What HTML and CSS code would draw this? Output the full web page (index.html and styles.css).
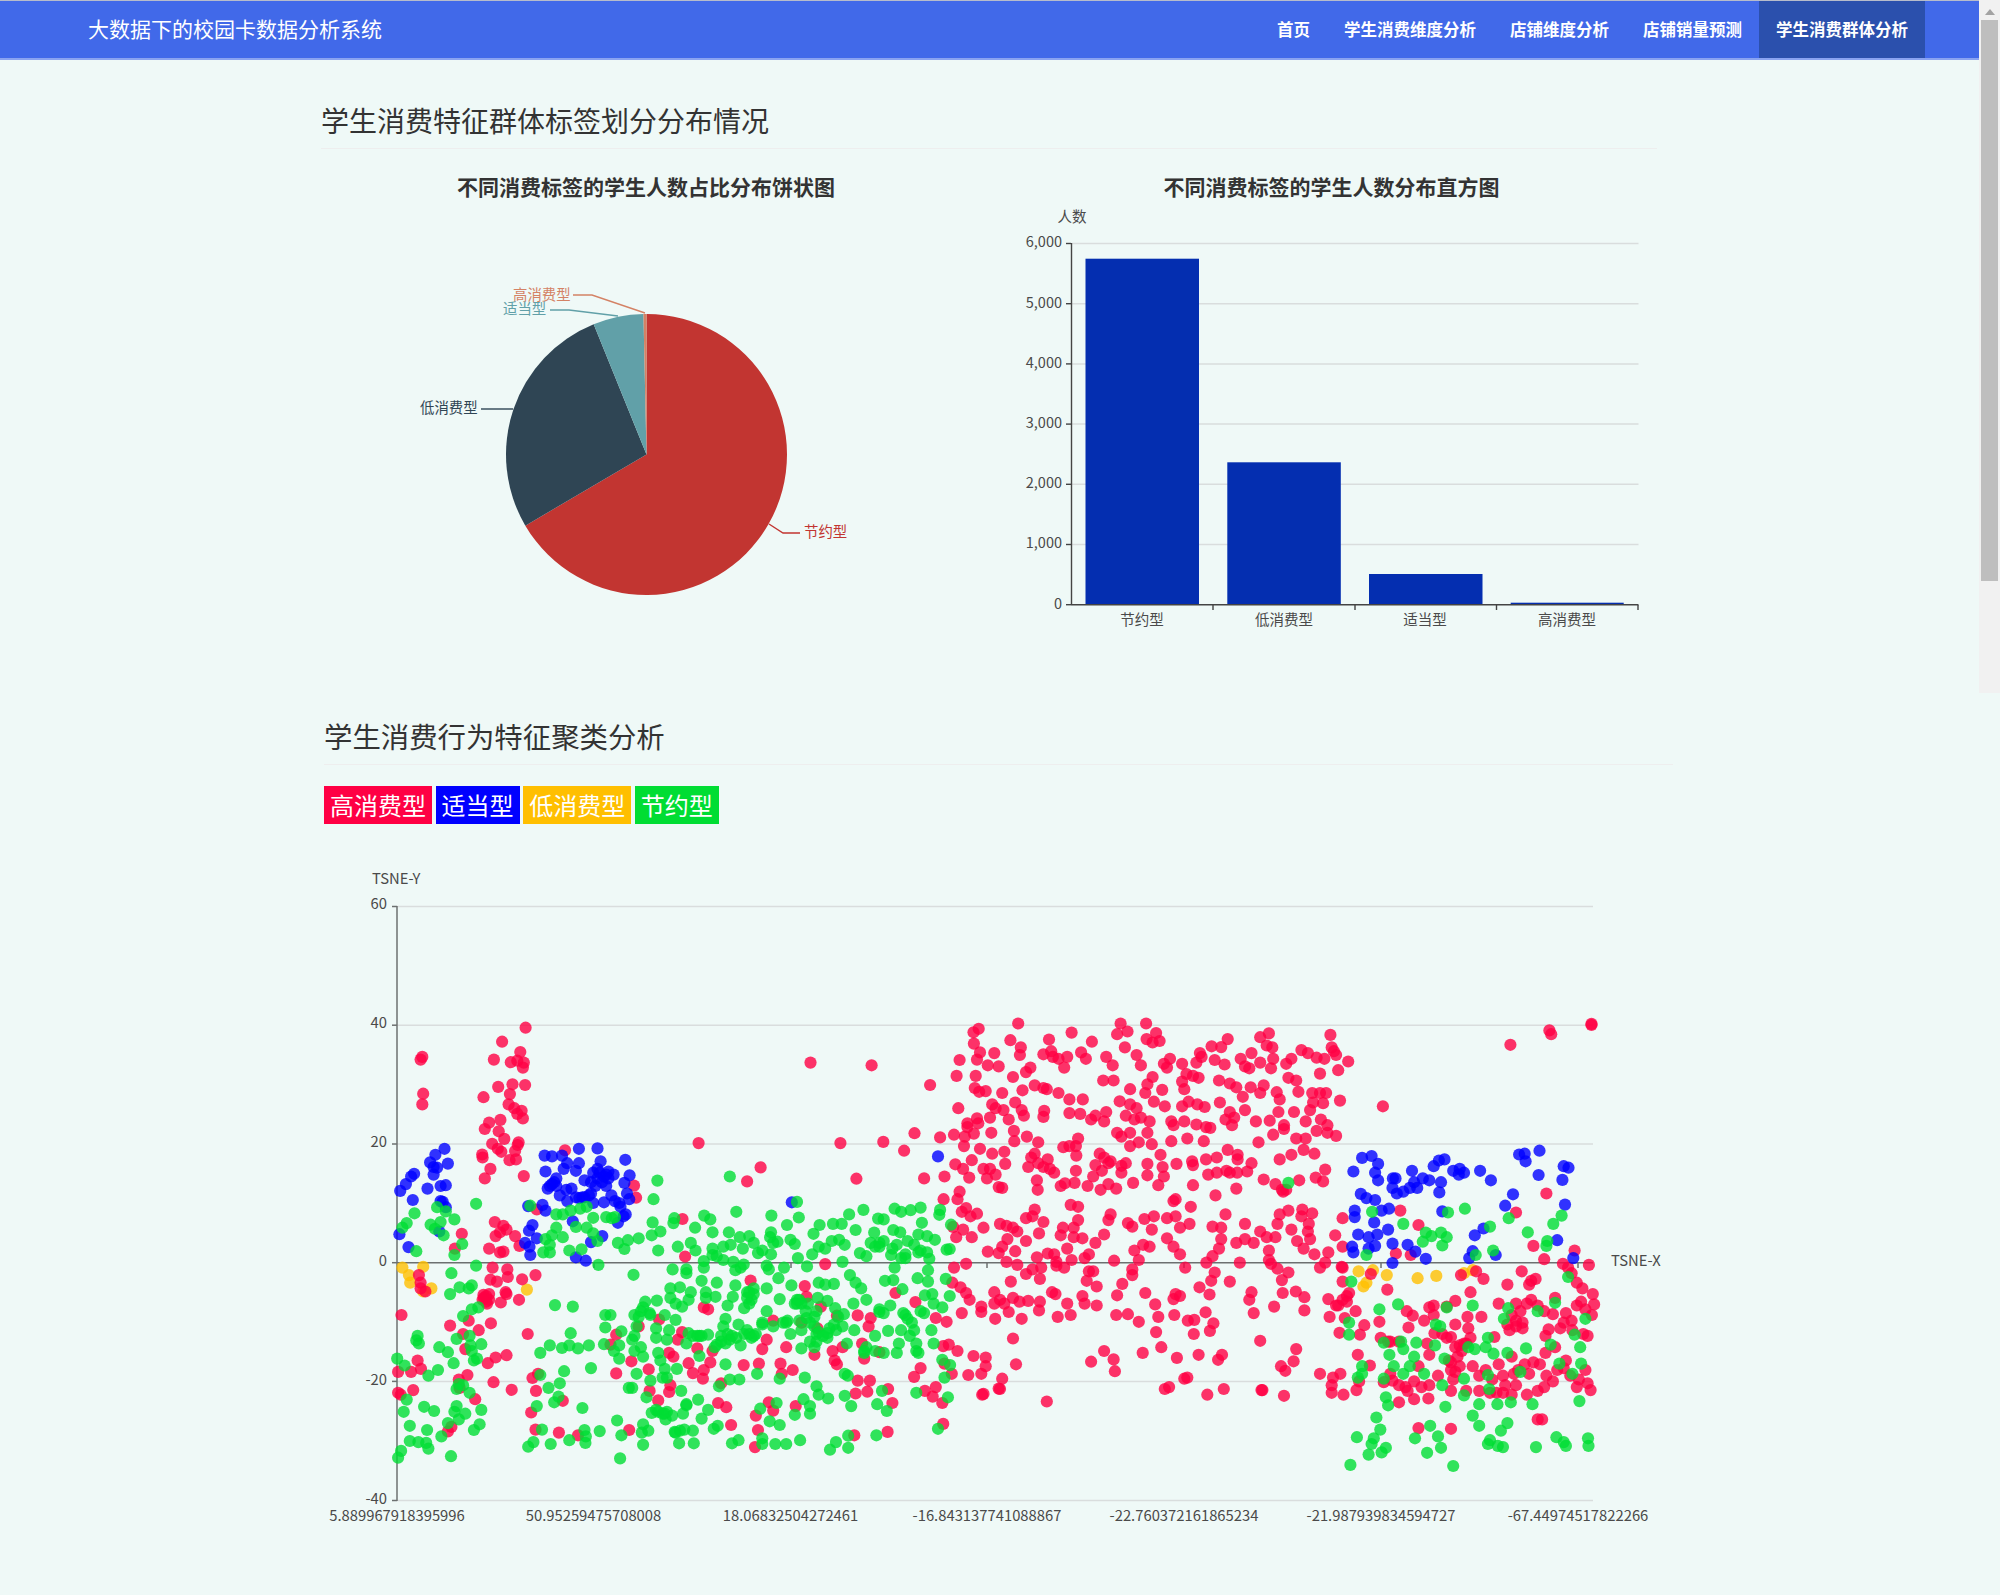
FILE: index.html
```html
<!DOCTYPE html>
<html lang="zh-CN">
<head>
	<meta charset="UTF-8">
	<meta name="viewport" content="width=device-width, initial-scale=1.0">
	<title>学生消费群体分析</title>
	<link rel="stylesheet" href="styles.css">
</head>
<body>

	<div class="page">
		<div class="main">
			<nav class="navbar">
				<div class="brand">大数据下的校园卡数据分析系统</div>
				<ul class="nav-links">
					<li><a href="#">首页</a></li>
					<li><a href="#">学生消费维度分析</a></li>
					<li><a href="#">店铺维度分析</a></li>
					<li><a href="#">店铺销量预测</a></li>
					<li class="active"><a href="#">学生消费群体分析</a></li>
				</ul>
			</nav>

			<section class="section section-labels">
				<h2>学生消费特征群体标签划分分布情况</h2>
				<div class="chart-row">
					<div class="chart-panel panel-pie">
						<h3>不同消费标签的学生人数占比分布饼状图</h3>
						<svg class="chart" viewBox="321 204 650 440" width="650" height="440">
							<g id="pie-slices"></g>
							<polyline class="leader" stroke="#d48265" points="573,295 592,295 645,313"/>
							<polyline class="leader" stroke="#61a0a8" points="550,310 569,310 618,316"/>
							<polyline class="leader" stroke="#2f4554" points="481,409 513,409"/>
							<polyline class="leader" stroke="#c23531" points="769,524 783,533 800,533"/>
							<text class="pie-label" fill="#d48265" x="513" y="300">高消费型</text>
							<text class="pie-label" fill="#61a0a8" x="503" y="314">适当型</text>
							<text class="pie-label" fill="#2f4554" x="420" y="413">低消费型</text>
							<text class="pie-label" fill="#c23531" x="804" y="537">节约型</text>
						</svg>
					</div>
					<div class="chart-panel panel-bar">
						<h3>不同消费标签的学生人数分布直方图</h3>
						<svg class="chart" viewBox="989 204 685 440" width="685" height="440">
							<g class="grid">
								<line x1="1072" y1="243.5" x2="1638.5" y2="243.5"/>
								<line x1="1072" y1="303.7" x2="1638.5" y2="303.7"/>
								<line x1="1072" y1="363.9" x2="1638.5" y2="363.9"/>
								<line x1="1072" y1="424.1" x2="1638.5" y2="424.1"/>
								<line x1="1072" y1="484.3" x2="1638.5" y2="484.3"/>
								<line x1="1072" y1="544.5" x2="1638.5" y2="544.5"/>
							</g>
							<g class="bars">
								<rect x="1085.5" y="258.7" width="113.5" height="346"/>
								<rect x="1227.3" y="462.3" width="113.5" height="142.4"/>
								<rect x="1369" y="574" width="113.5" height="30.7"/>
								<rect x="1510.7" y="602.7" width="113" height="2"/>
							</g>
							<g class="axis">
								<line x1="1071.5" y1="243" x2="1071.5" y2="605"/>
								<line x1="1071" y1="604.7" x2="1638.5" y2="604.7"/>
								<line x1="1066" y1="243.5" x2="1071" y2="243.5"/>
								<line x1="1066" y1="303.7" x2="1071" y2="303.7"/>
								<line x1="1066" y1="363.9" x2="1071" y2="363.9"/>
								<line x1="1066" y1="424.1" x2="1071" y2="424.1"/>
								<line x1="1066" y1="484.3" x2="1071" y2="484.3"/>
								<line x1="1066" y1="544.5" x2="1071" y2="544.5"/>
								<line x1="1066" y1="604.7" x2="1071" y2="604.7"/>
								<line x1="1213" y1="605" x2="1213" y2="610"/>
								<line x1="1355" y1="605" x2="1355" y2="610"/>
								<line x1="1496.5" y1="605" x2="1496.5" y2="610"/>
								<line x1="1638" y1="605" x2="1638" y2="610"/>
							</g>
							<g class="tick-text tick-end">
								<text x="1062" y="247">6,000</text>
								<text x="1062" y="307.5">5,000</text>
								<text x="1062" y="368">4,000</text>
								<text x="1062" y="428">3,000</text>
								<text x="1062" y="488">2,000</text>
								<text x="1062" y="548">1,000</text>
								<text x="1062" y="608.5">0</text>
							</g>
							<g class="tick-text tick-middle">
								<text x="1072" y="222">人数</text>
								<text x="1142" y="624.5">节约型</text>
								<text x="1284" y="624.5">低消费型</text>
								<text x="1425" y="624.5">适当型</text>
								<text x="1567" y="624.5">高消费型</text>
							</g>
						</svg>
					</div>
				</div>
			</section>

			<section class="section section-cluster">
				<h2>学生消费行为特征聚类分析</h2>
				<div class="legend">
					<span class="tag tag-high">高消费型</span>
					<span class="tag tag-mid">适当型</span>
					<span class="tag tag-low">低消费型</span>
					<span class="tag tag-save">节约型</span>
				</div>
				<svg class="chart scatter" viewBox="324 850 1400 700" width="1400" height="700">
					<g class="grid">
						<line x1="397" y1="906.5" x2="1593" y2="906.5"/>
						<line x1="397" y1="1025.2" x2="1593" y2="1025.2"/>
						<line x1="397" y1="1144" x2="1593" y2="1144"/>
						<line x1="397" y1="1381.4" x2="1593" y2="1381.4"/>
						<line x1="397" y1="1500.5" x2="1593" y2="1500.5"/>
					</g>
					<g class="axis axis-soft">
						<line x1="397" y1="906" x2="397" y2="1501"/>
						<line x1="397" y1="1262.7" x2="1593" y2="1262.7"/>
						<line x1="392" y1="906.5" x2="397" y2="906.5"/>
						<line x1="392" y1="1025.2" x2="397" y2="1025.2"/>
						<line x1="392" y1="1144" x2="397" y2="1144"/>
						<line x1="392" y1="1262.7" x2="397" y2="1262.7"/>
						<line x1="392" y1="1381.4" x2="397" y2="1381.4"/>
						<line x1="392" y1="1500.5" x2="397" y2="1500.5"/>
						<line x1="594" y1="1263" x2="594" y2="1268"/>
						<line x1="791" y1="1263" x2="791" y2="1268"/>
						<line x1="987" y1="1263" x2="987" y2="1268"/>
						<line x1="1184" y1="1263" x2="1184" y2="1268"/>
						<line x1="1381" y1="1263" x2="1381" y2="1268"/>
						<line x1="1578" y1="1263" x2="1578" y2="1268"/>
					</g>
					<g id="scatter-dots"></g>
					<g class="tick-text tick-end">
						<text x="387" y="909">60</text>
						<text x="387" y="1028">40</text>
						<text x="387" y="1147">20</text>
						<text x="387" y="1266">0</text>
						<text x="387" y="1385">-20</text>
						<text x="387" y="1504">-40</text>
					</g>
					<g class="tick-text tick-middle">
						<text x="397" y="1520.5">5.889967918395996</text>
						<text x="593.5" y="1520.5">50.95259475708008</text>
						<text x="790.5" y="1520.5">18.06832504272461</text>
						<text x="987" y="1520.5">-16.843137741088867</text>
						<text x="1184" y="1520.5">-22.760372161865234</text>
						<text x="1381" y="1520.5">-21.987939834594727</text>
						<text x="1578" y="1520.5">-67.44974517822266</text>
					</g>
					<text class="tick-text" x="372" y="883.5">TSNE-Y</text>
					<text class="tick-text" x="1611" y="1265.5">TSNE-X</text>
				</svg>
			</section>
		</div>

		<div class="scrollbar">
			<div class="scroll-arrow"></div>
			<div class="scroll-thumb"></div>
		</div>
	</div>

	<script src="charts.js"></script>

</body>
</html>
```

FILE: styles.css
```css
* {
	box-sizing: border-box;
}
html, body {
	margin: 0;
	height: 1595px;
	overflow: hidden;
}
body {
	font-family: 'Noto Sans CJK SC', 'Noto Sans', sans-serif;
	background-color: #eff9f7;
	color: #333;
}
.page {
	display: flex;
	align-items: flex-start;
}
.main {
	width: 1979px;
}
.navbar {
	display: flex;
	justify-content: space-between;
	height: 60px;
	padding: 0 54px 0 88px;
	background-color: #4169e9;
	border-top: 1px solid #b7bccb;
	border-bottom: 2px solid #8aa3f1;
}
.brand {
	font-size: 21px;
	line-height: 55px;
	color: #fff;
}
.nav-links {
	display: flex;
	margin: 0;
	padding: 0;
	list-style: none;
}
.nav-links a {
	display: block;
	padding: 0 17px;
	font-size: 16.5px;
	font-weight: 700;
	line-height: 57px;
	color: #fff;
	text-decoration: none;
}
.nav-links .active {
	background-color: #2b50ad;
}
.section h2 {
	margin: 0;
	padding-bottom: 8px;
	font-size: 28px;
	font-weight: 400;
	line-height: 40px;
	color: #333;
	border-bottom: 1px solid #eeeeee;
}
.section-labels {
	width: 1336px;
	margin: 40px 0 0 321px;
}
.section-cluster {
	width: 1349px;
	margin: 72px 0 0 324px;
}
.section-cluster h2 {
	font-size: 28.4px;
}
.chart-row {
	display: flex;
	gap: 18px;
}
.chart-panel h3 {
	margin: 22px 0 3px;
	font-size: 21px;
	font-weight: 700;
	line-height: 30px;
	text-align: center;
	color: #333;
}
.panel-pie {
	flex: 0 0 650px;
}
.panel-bar {
	flex: 0 0 685px;
}
.chart {
	display: block;
}
.leader {
	fill: none;
	stroke-width: 1.4;
}
.pie-label {
	font-size: 14.4px;
}
.grid line {
	stroke: #d9dddd;
	stroke-width: 1.5;
}
.bars rect {
	fill: #042eb0;
}
.axis line {
	stroke: #444;
	stroke-width: 1.4;
}
.axis-soft line {
	stroke: #6c7070;
	stroke-width: 1.5;
}
.tick-text {
	font-size: 14.5px;
	fill: #4a4a4a;
}
.scatter .tick-text {
	font-size: 14.8px;
}
.tick-end {
	text-anchor: end;
}
.tick-middle {
	text-anchor: middle;
}
.legend {
	display: flex;
	gap: 3.6px;
	margin-top: 21px;
	margin-bottom: 26px;
}
.tag {
	padding: 0 6px;
	font-size: 24px;
	line-height: 38px;
	color: #fff;
}
.tag-high {
	background-color: #ff0044;
}
.tag-mid {
	background-color: #0000ff;
}
.tag-low {
	background-color: #ffbf00;
}
.tag-save {
	background-color: #00dd33;
}
.dot {
	fill-opacity: 0.8;
}
.scrollbar {
	flex: 0 0 21px;
	height: 693px;
	padding-left: 1px;
	background-color: #f1f1f1;
}
.scroll-arrow {
	width: 0;
	height: 0;
	margin: 9px auto 5px;
	border-left: 5px solid transparent;
	border-right: 5px solid transparent;
	border-bottom: 6px solid #a3a3a3;
}
.scroll-thumb {
	width: 17px;
	height: 561px;
	margin: 3px 0 0 1px;
	background-color: #bebebe;
}
```

FILE: charts.js
```js
// pie: values in the order echarts draws them, clockwise from the top
const pieData = [
	[5750, '#c23531'],
	[2360, '#2f4554'],
	[500, '#61a0a8'],
	[30, '#d48265']
];

function drawPie() {
	const cx = 646.5, cy = 454.5, r = 140.5;
	const group = document.getElementById('pie-slices');
	const total = pieData.reduce((sum, item) => sum + item[0], 0);
	let angle = 0;
	pieData.forEach(item => {
		const next = angle + item[0] / total * Math.PI * 2;
		const path = document.createElementNS('http://www.w3.org/2000/svg', 'path');
		const large = next - angle > Math.PI ? 1 : 0;
		path.setAttribute('d', 'M' + cx + ' ' + cy +
			'L' + (cx + Math.sin(angle) * r) + ' ' + (cy - Math.cos(angle) * r) +
			'A' + r + ' ' + r + ' 0 ' + large + ' 1 ' + (cx + Math.sin(next) * r) + ' ' + (cy - Math.cos(next) * r) + 'Z');
		path.setAttribute('fill', item[1]);
		group.appendChild(path);
		angle = next;
	});
}

// scatter points are x,y pairs, kept in two blocks with their own x origin
const scaleX = 2.306, scaleY = 2.635;

const leftPoints = {
	red: [232,157,236,150,238,247,236,275,420,110,474,73,401,157,462,137,440,164,455,160,470,165,468,178,411,229,444,222,473,224,377,256,438,248,435,275,448,285,465,292,455,300,468,312,380,340,390,323,416,316,412,346,425,366,397,379,410,392,418,400,374,407,375,415,458,375,456,382,450,398,437,422,452,420,470,464,393,445,380,470,565,396,724,489,729,521,873,377,1016,441,985,478,1200,377,1299,374,1347,397,1371,351,1237,471,1131,165,1272,172,1407,224,1393,470,
		403,585,423,595,430,605,415,612,405,622,450,622,327,616,311,655,390,655,415,665,423,663,460,648,398,705,432,710,433,730,393,737,408,742,497,725,466,736,377,777,390,775,383,795,417,797,428,770,430,775,459,790,228,725,232,745,232,760,243,768,188,830,300,858,394,852,366,870,343,845,330,880,335,920,479,880,430,936,405,942,387,957,225,950,233,972,180,980,210,980,340,988,320,1000,322,1022,400,1007,215,1028,180,1035,186,1040,442,1027,358,1052,503,985,490,996,498,1030,487,1087,497,1132,560,1056,551,1140,595,1147,303,1125,295,1137,
		500,552,836,577,842,676,1165,696,993,739,1118,754,1122,782,1155,808,1327,772,1373,796,1240,831,1270,838,1265,860,1045,845,1192,832,1110,850,1147,865,835,875,825,895,683,882,670,908,735,860,782,842,870,918,895,815,885,810,805,930,815,940,718,952,850,957,905,925,900,955,885,975,758,973,683,984,860,983,883,998,1030,895,1020,920,1075,915,1062,958,1090,975,1065,985,977,962,1012,958,1140,935,1182,925,1205,915,1187,950,1192,960,1250,905,1255,945,1290,928,1437,912,1450,908,1470,925,1507,938,1440,958,1535,942,1535,965,1385,970,1370,993,1457,985,1495,988,1525,985,1240,1003,1268,1003,1235,1037,1262,1032,1310,1025,1320,1062,1097,1070,1045,1082,1035,1060,1005,1095,1010,1133,1003,1178,1232,1147,1309,1138,1420,1020,1395,1030,1413,1045,1435,1062,1437,1117,1527,1040,1530,1038,1565,1024,808,1015,805,1033,760,1030,780,1055,918,1062,937,1073,948,1120,713,1133,925,1010,
		1507,85,1519,76,1508,115,1522,138,1475,158,1515,157,1540,172,1468,200,1512,200,1510,232,1520,242,1535,240,1555,140,1565,175,1472,285,1550,275,1558,285,1515,312,1545,310,1493,325,1493,335,1518,325,1462,355,1487,360,1508,352,1548,350,1430,362,1485,385,1522,392,1550,405,1503,422,1465,433,1483,445,1530,445,1545,445,1497,468,1538,470,1558,460,1440,465,1565,493,1475,505,1470,525,1438,525,1490,548,1480,558,1515,563,1500,570,1530,600,1460,598,1483,605,1467,625,1503,625,1540,663,1565,667,1462,705,1490,695,1458,745,1477,757,1490,772,1498,790,1525,808,1525,822,1555,770,1555,800,1480,825,1557,840,1445,848,1420,838,
		383,780,378,785,390,790,385,800,375,790],
	blue: [287,392,266,408,254,428,217,458,210,465,198,485,185,503,262,440,270,442,295,431,262,460,278,490,290,488,248,497,214,527,278,530,283,532,290,546,275,610,183,617,204,651,
		518,410,535,412,558,410,597,392,640,391,647,425,704,421,570,430,597,430,590,450,520,452,562,445,545,470,535,485,525,497,610,475,630,455,640,445,665,452,677,460,714,462,702,482,708,510,640,470,635,490,660,490,568,500,580,497,553,515,570,530,598,522,620,515,630,535,655,533,680,530,693,545,705,565,687,587,713,525,480,543,513,540,520,555,583,583,490,593,482,608,500,628,473,640,483,650,485,672,590,678,613,687,651,622,625,638,1425,412,1088,533,
		625,480,645,455,655,465,665,470,650,480,660,460,625,510,610,520,590,520,540,480,545,490,530,490,605,520,672,515,690,535,700,570],
	green: [778,476,769,525,945,465,1100,532,960,558,1041,568,1104,573,1253,553,1220,565,1325,550,1340,558,1362,554,1385,547,1430,553,1428,566,886,568,900,578,817,575,815,588,767,586,785,610,765,620,865,600,905,612,943,612,1077,593,1040,612,1038,625,1152,593,1183,590,1203,590,1138,616,1235,606,1287,576,1300,578,1322,606,1338,612,1388,587,1278,613,1380,618,1400,622,1418,632,1455,592,855,640,825,650,866,660,780,660,735,628,710,633,687,640,702,656,968,625,990,622,947,645,930,650,905,655,905,672,975,655,1020,660,1010,667,1045,640,1055,637,1085,632,1095,643,1135,670,1150,650,1165,655,1180,635,1197,632,1210,645,1245,667,1260,675,1270,640,1290,650,1300,635,1320,655,1330,645,1355,635,1370,645,1385,660,1400,665,1445,658,1452,656,1350,680,1405,682,1317,672,1102,680,1040,670,915,675,930,685,885,688,885,705,953,690,977,697,958,712,970,705,1030,700,1070,705,1035,710,1123,702,1205,690,813,710,845,710,845,720,723,724,880,740,915,745,958,752,1057,733,1087,752,1150,745,1165,750,1185,748,1222,725,1235,745,1248,760,1260,790,1303,740,1325,705,1322,738,1343,762,1378,733,1402,712,1402,742,1395,778,1412,775,1443,735,1452,780,808,760,830,757,890,770,777,792,808,785,820,800,835,808,855,770,850,790,890,785,912,782,940,805,952,782,978,812,985,770,1000,775,995,790,1030,760,1030,820,1060,788,1105,790,1100,800,1125,800,1170,793,1148,785,1188,812,1145,820,1290,822,1315,805,1385,820,1415,800,1435,810,1393,825,1230,800,1208,828,1122,838,
		1045,860,1068,850,1078,845,1110,870,1145,880,1170,878,1190,870,1170,890,1145,900,1215,905,1232,870,1205,860,1280,885,1310,872,1350,830,1365,850,1410,870,1340,870,1360,885,1335,905,1375,925,1415,905,1330,930,1300,930,1255,925,1280,925,1110,918,1085,880,1020,850,1000,885,978,880,970,910,945,895,925,885,895,882,875,885,850,878,845,905,935,905,915,908,875,938,860,885,805,870,775,890,800,895,725,885,695,873,658,830,670,830,658,863,655,907,690,910,678,925,690,945,725,925,740,915,745,940,780,930,785,950,795,972,823,972,730,985,790,995,800,995,762,1003,725,830,745,810,750,795,735,835,762,830,775,865,795,830,820,843,935,840,930,860,965,855,990,880,1020,855,
		935,960,945,1000,967,1000,1008,985,1060,998,1118,995,1145,1018,1150,1040,1172,1050,1210,985,1217,990,1210,1043,1225,1070,1296,1030,1285,1065,1307,1083,1375,1035,1448,1047,1440,995,1453,962,1435,948,1425,1130,1283,1147,1218,1180,1176,1185,1190,1165,1218,1148,1130,1090,1115,1052,1130,1070,1053,1062,1015,1077,1095,1093,1037,1110,1060,1120,1020,1155,1020,1170,1050,1170,1075,1170,1107,1160,965,1160,950,1168,908,1130,917,1122,895,1080,880,1103,872,1053,845,1068,833,1030,920,1018,830,1135,820,1140,840,1132,860,1135,862,1168,828,1168,745,1172,745,1118,742,1140,757,1135,695,1147,685,1108,692,1208,645,1136,610,1133,613,1150,612,1167,575,1160,532,1170,492,1165,480,1177,512,1132,605,1075,540,1060,550,1045,527,1022,553,1010,563,978,625,970,508,988,500,1070,720,1022,753,1047,712,1022,765,1088,780,1085,795,1090,797,1105,812,1095,837,1090,845,1065,818,1138,
		542,804,583,808,578,878,530,910,508,930,558,917,575,910,595,918,620,910,303,720,360,700,322,757,350,752,343,760,300,775,360,537,270,546,290,557,218,562,200,588,190,600,255,592,265,603,278,585,310,578,285,620,328,643,310,672,222,662,485,542,545,565,560,565,578,555,600,550,615,545,630,574,590,598,660,572,673,575,640,635,560,625,545,600,535,620,520,630,530,645,515,665,530,665,575,660,603,657,642,698,630,615,680,572,615,600,
		365,810,350,815,330,833,345,885,225,885,222,897,228,905,315,893,347,910,372,907,275,915,295,928,350,925,362,945,355,950,308,957,178,945,195,963,272,975,250,990,320,1012,330,1015,315,1025,200,1053,345,1035,193,1085,240,1072,263,1083,310,1085,335,1090,372,1080,315,1070,320,1105,207,1122,247,1133,295,1115,368,1118,355,1133,280,1150,207,1162,227,1165,245,1167,250,1182,187,1188,180,1206,302,1202,
		1110,800,1120,820,1130,850,1140,860,1150,875,1160,885,1175,865,1185,855,1195,835,1140,835,1105,845,1075,850,990,770,985,785,1000,760,990,800,1290,815,1300,825,1345,825,1355,840,1370,870,1375,905,1380,930,1255,930,1260,915,1130,900,1140,915,940,880,950,885,960,890,985,870,995,890,1005,880,925,900,910,915,870,885,880,885,740,820,760,825,730,860,720,895,1095,800,1100,790,800,1085,790,1090,775,1080,1280,650,1290,640,1340,680,1350,670,1380,665,1000,640],
	amber: [190,705,205,725,208,745,238,703,257,760,238,768,477,763]
};

const rightPoints = {
	red: [42,62,165,86,278,62,337,62,270,90,294,83,360,87,24,106,113,104,338,103,352,112,368,108,620,88,600,98,525,103,762,92,1267,80,1271,90,1364,63,1364,66,1177,118,
		48,125,46,145,100,143,118,135,122,150,135,155,155,150,148,178,187,138,198,155,212,110,288,125,245,150,260,172,315,145,325,172,378,168,392,155,420,168,385,178,461,140,465,150,453,165,495,158,488,122,510,124,518,170,555,155,580,140,565,175,575,180,600,165,630,155,625,180,615,120,628,125,660,168,672,155,695,132,710,140,730,152,748,155,770,135,775,145,765,125,780,185,803,162,738,194,
		30,203,70,178,60,190,135,245,52,238,80,225,100,232,108,235,160,262,352,203,340,222,300,235,335,245,238,212,262,212,374,237,430,195,445,200,458,205,420,215,425,235,505,212,530,220,545,230,560,255,578,230,600,245,608,225,638,243,645,262,665,205,683,212,688,242,720,245,738,245,752,245,722,270,745,272,715,290,784,265,883,280,191,262,
		5,245,35,270,50,290,55,305,8,290,20,315,102,292,100,308,160,298,185,300,210,315,220,305,245,295,240,320,276,267,300,275,315,285,325,310,345,320,290,305,310,315,355,268,380,280,420,280,435,268,455,275,472,282,507,270,530,295,520,315,540,310,565,290,590,320,622,318,642,295,678,295,655,330,705,320,740,315,755,330,395,320,425,320,453,328,400,330,485,337,475,335,535,330,
		32,345,62,360,33,372,88,375,180,365,175,385,160,385,146,388,176,410,270,350,300,350,280,360,340,350,320,375,300,385,350,380,395,372,432,365,470,372,596,375,630,355,655,340,683,365,705,365,730,345,755,350,775,358,700,395,725,405,672,408,645,420,525,395,548,408,580,430,548,420,10,400,12,432,80,405,72,415,110,420,88,430,65,440,230,405,240,415,255,425,290,430,280,437,370,408,340,432,407,432,443,425,445,435,475,420,500,415,522,450,
		100,440,115,445,125,455,175,450,220,435,215,465,250,430,235,450,340,462,375,440,378,465,280,455,140,490,150,483,172,482,202,490,232,500,250,485,268,497,307,482,365,488,445,488,480,460,500,455,530,455,547,455,570,452,608,473,635,485,650,500,660,500,690,475,728,468,745,478,750,447,5,495,85,475,87,500,497,515,545,497,653,505,
		400,530,405,525,440,545,163,540,180,545,80,552,255,565,250,580,295,588,305,597,333,577,355,570,350,605,385,575,405,570,415,600,437,590,520,565,565,590,490,597,510,600,640,590,645,565,665,555,697,552,720,562,695,570,712,590,60,575,75,570,100,585,15,595,30,600,145,600,170,600,180,580,790,575,0,590,
		40,610,17,630,5,650,35,662,60,635,90,615,140,620,170,625,190,628,240,618,220,640,385,628,400,650,415,670,510,630,545,640,565,630,585,640,600,610,615,625,635,625,620,660,672,605,710,610,715,630,685,635,700,655,773,620,725,670,757,665,790,650,505,655,490,675,345,650,330,645,310,660,320,685,205,670,195,680,110,668,125,670,85,678,130,690,155,655,165,685,95,705,15,690,40,698,263,687,476,692,553,692,620,685,625,695,750,692,738,705,790,705,913,668,947,672,965,593,923,555,1190,560,1260,510,1230,648,1325,660,1255,683,
		75,710,60,722,92,735,25,742,130,700,148,705,205,715,215,715,200,740,223,755,305,710,305,725,282,748,427,705,495,718,487,740,460,757,530,742,640,708,665,718,650,738,580,770,575,790,652,772,682,768,702,783,270,778,335,772,405,775,415,780,400,788,483,776,120,770,128,775,155,800,0,790,30,785,45,795,65,793,92,795,190,780,195,800,10,800,
		757,788,788,703,790,742,780,805,800,795,805,772,893,763,855,722,1085,770,1098,715,1115,735,1203,715,1170,750,1225,740,1235,735,1220,750,1298,695,1330,745,1310,705,1318,720,1358,698,1343,760,1367,775,1370,802,1280,785,
		20,822,50,840,90,818,133,835,163,830,223,805,268,830,295,828,320,848,358,802,365,835,402,830,433,845,448,843,360,875,447,880,474,823,484,872,492,852,585,825,632,808,702,818,760,835,795,838,820,820,875,848,840,857,783,877,830,882,878,890,900,900,938,820,952,832,990,810,1000,805,1050,793,1030,808,978,845,942,863,1002,878,1040,888,1050,855,1078,835,1110,835,1080,865,1150,800,1140,888,1190,800,1215,800,1240,805,1180,830,1190,860,1170,855,1205,865,1258,885,1265,868,1275,828,1292,865,1318,845,1330,805,1305,825,1340,795,1355,885,1345,880,30,892,
		600,898,683,920,240,925,262,947,265,978,210,953,329,930,372,915,408,943,458,935,512,935,503,948,37,960,677,952,648,965,658,977,738,985,768,995,765,1015,785,985,828,1005,822,1028,765,1035,792,1040,853,963,825,935,885,1007,905,1003,920,1015,935,1020,940,1030,920,1060,955,1052,988,1050,972,1020,990,1015,965,965,990,935,1040,955,1035,950,1060,910,1050,915,1075,905,1050,980,1060,965,1045,1000,1040,1030,1075,1030,1105,990,1105,1030,1130,1035,1145,1035,1160,1035,1160,990,1185,985,1190,1015,1180,1040,1215,1040,1240,1030,1255,1020,1275,1005,1300,970,1315,990,1330,1020,1355,1010,1362,1028,1350,975,1210,960,1230,955,1180,940,1280,915,1258,930,1240,1105,1250,1105,1040,1130,965,1128,5,998,0,1025,108,1058,380,1025,390,1020,425,998,432,995,478,1040,516,1025,605,1028,603,1028,655,1043,1063,725,920,900,895,900,985,905,
		900,985,955,1005,1010,990,1090,965,1120,975,1135,1000,1150,960,1165,1015,1195,975,1220,985,1245,960,1260,990,1285,975,1305,950,1335,1000,1040,975,1055,940,1065,925,1030,890,1020,880,1070,905,1085,890,1190,845,1205,850,1175,870,1200,820,1225,790,1255,820,1300,850,1320,870,1365,830,1350,815,1000,830,800,780,790,790,775,805],
	blue: [815,452,835,416,857,411,872,432,865,455,872,475,906,470,912,470,905,495,915,510,930,505,945,495,962,495,950,450,955,480,975,470,990,475,1000,438,1012,423,1025,420,1017,480,1013,507,1045,450,1060,445,1058,460,1070,455,1107,450,1132,475,1183,512,1165,542,1197,407,1210,405,1212,425,1244,397,1242,461,1297,474,1300,438,1311,442,1303,539,832,511,845,522,865,527,818,555,818,572,880,555,897,550,863,586,895,605,826,618,850,625,870,618,812,650,815,665,850,655,865,648,905,642,940,645,958,663,982,682,905,693,1020,557,1095,620,1115,602,1090,662,1082,680,1143,672,1285,633,1322,680],
	green: [665,482,858,558,930,590,1033,560,1072,550,1173,575,1295,568,1276,590,1217,612,1130,597,1262,635,1260,648,982,613,995,622,1017,613,1030,625,1020,647,975,637,845,672,1097,672,1137,660,1310,730,810,742,875,815,918,802,1030,810,1090,805,1172,812,1162,840,1240,820,1280,798,1350,840,805,850,805,882,1005,855,1015,860,1325,882,885,903,925,900,930,920,898,935,908,965,960,903,1003,910,1080,915,1095,920,1125,890,1120,915,1138,932,1170,930,1213,918,1270,908,1338,915,955,940,945,965,1025,945,835,965,835,985,825,995,930,985,885,998,978,985,1020,1015,1070,998,1125,988,1128,1025,1200,980,1290,958,1340,958,1320,985,1070,1042,1105,1065,1147,1065,1178,1060,1228,1065,1336,1057,890,1047,895,1068,1027,1072,868,1100,1090,1095,1105,1122,1170,1115,1155,1135,992,1122,877,1132,823,1152,862,1155,857,1170,890,1180,880,1192,850,1198,957,1155,1010,1150,1017,1180,985,1193,1130,1160,1125,1170,1148,1175,1160,1178,1283,1152,1300,1165,1305,1175,1236,1178,1356,1155,1357,1175,808,1225,1045,1228],
	amber: [827,715,860,712,892,725,845,745,838,755,963,733,1006,727,1070,720,1090,712]
};

const dotColors = {
	amber: '#ffbf00',
	red: '#ff0044',
	blue: '#0000ff',
	green: '#00dd33'
};

function addDots(group, points, originX, color) {
	for (let i = 0; i < points.length; i += 2) {
		const dot = document.createElementNS('http://www.w3.org/2000/svg', 'circle');
		dot.setAttribute('class', 'dot');
		dot.setAttribute('cx', (originX + points[i] / scaleX).toFixed(1));
		dot.setAttribute('cy', (1000 + points[i + 1] / scaleY).toFixed(1));
		dot.setAttribute('r', 6.1);
		dot.setAttribute('fill', color);
		group.appendChild(dot);
	}
}

function drawScatter() {
	const group = document.getElementById('scatter-dots');
	Object.keys(dotColors).forEach(name => {
		addDots(group, leftPoints[name], 320, dotColors[name]);
		addDots(group, rightPoints[name], 1000, dotColors[name]);
	});
}

drawPie();
drawScatter();
```
